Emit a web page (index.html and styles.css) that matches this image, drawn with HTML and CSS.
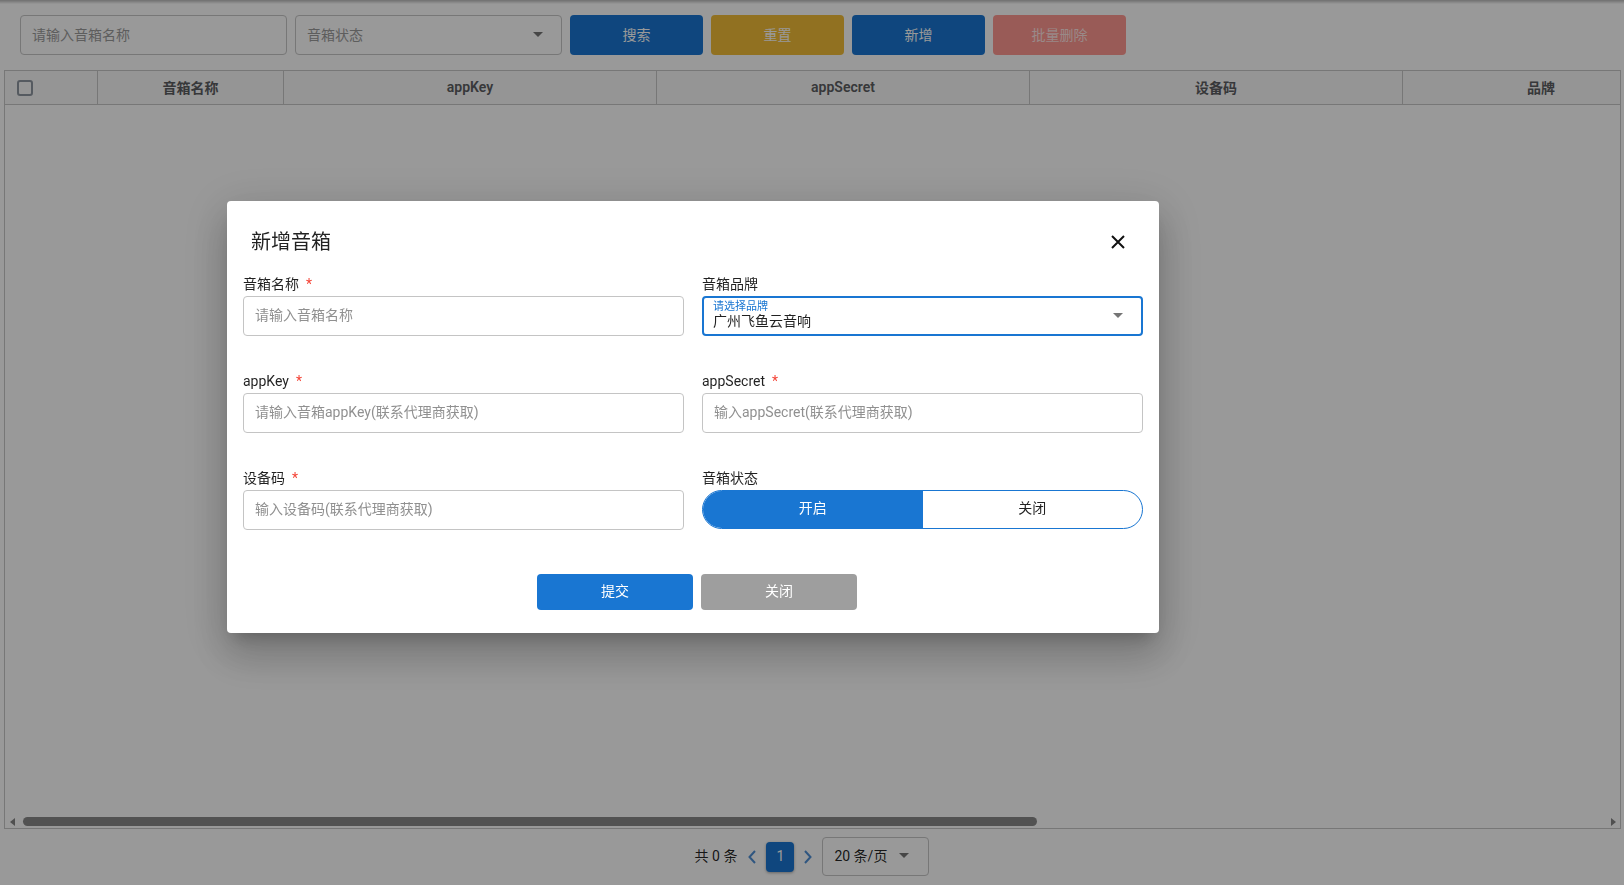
FILE: index.html
```html
<!DOCTYPE html>
<html lang="zh-CN">
<head>
<meta charset="utf-8">
<title>音箱管理</title>
<link rel="stylesheet" href="styles.css">
</head>
<body>
<div class="appbar-shadow"></div>
<div class="toolbar">
  <div class="search-field"><span class="ph">请输入音箱名称</span></div>
  <div class="search-field select-field"><span class="ph">音箱状态</span><span class="caret"></span></div>
  <div class="btn btn-blue">搜索</div>
  <div class="btn btn-yellow">重置</div>
  <div class="btn btn-blue">新增</div>
  <div class="btn btn-red">批量删除</div>
</div>

<div class="table-wrap">
  <div class="thead">
    <div class="th c1"><span class="checkbox"></span></div>
    <div class="th c2">音箱名称</div>
    <div class="th c3">appKey</div>
    <div class="th c3">appSecret</div>
    <div class="th c3">设备码</div>
    <div class="th c6">品牌</div>
  </div>
  <div class="tbody"></div>
  <div class="hscroll">
    <span class="arr-left"></span>
    <span class="thumb"></span>
    <span class="arr-right"></span>
  </div>
</div>

<div class="pager">
  <span class="total">共 0 条</span>
  <svg class="chev" width="8" height="14" viewBox="0 0 8 14"><path d="M7 1 L1.5 7 L7 13" fill="none" stroke="#4f8fd6" stroke-width="2"/></svg>
  <span class="page">1</span>
  <svg class="chev" width="8" height="14" viewBox="0 0 8 14"><path d="M1 1 L6.5 7 L1 13" fill="none" stroke="#4f8fd6" stroke-width="2"/></svg>
  <div class="size-select"><span>20 条/页</span><span class="caret"></span></div>
</div>

<div class="overlay">
  <div class="modal">
    <div class="modal-head">
      <div class="title">新增音箱</div>
      <div class="close">
        <svg width="14" height="14" viewBox="0 0 14 14"><path d="M1 1 L13 13 M13 1 L1 13" stroke="#111" stroke-width="2" fill="none"/></svg>
      </div>
    </div>
    <div class="form">
      <div class="field">
        <div class="label">音箱名称<span class="req">*</span></div>
        <div class="input"><span class="ph2">请输入音箱名称</span></div>
      </div>
      <div class="field">
        <div class="label">音箱品牌</div>
        <div class="brand-select">
          <div class="brand-text">
            <span class="float-label">请选择品牌</span>
            <span class="value">广州飞鱼云音响</span>
          </div>
          <span class="caret caret-dark"></span>
        </div>
      </div>
      <div class="field">
        <div class="label">appKey<span class="req">*</span></div>
        <div class="input"><span class="ph2">请输入音箱appKey(联系代理商获取)</span></div>
      </div>
      <div class="field">
        <div class="label">appSecret<span class="req">*</span></div>
        <div class="input"><span class="ph2">输入appSecret(联系代理商获取)</span></div>
      </div>
      <div class="field">
        <div class="label">设备码<span class="req">*</span></div>
        <div class="input"><span class="ph2">输入设备码(联系代理商获取)</span></div>
      </div>
      <div class="field">
        <div class="label">音箱状态</div>
        <div class="toggle">
          <div class="opt on">开启</div>
          <div class="opt">关闭</div>
        </div>
      </div>
    </div>
    <div class="actions">
      <div class="abtn submit">提交</div>
      <div class="abtn cancel">关闭</div>
    </div>
  </div>
</div>
</body>
</html>
```
FILE: styles.css
```css
* { box-sizing: border-box; }
html, body { margin: 0; padding: 0; }
body {
  width: 1624px;
  height: 885px;
  overflow: hidden;
  background: #fff;
  font-family: Roboto, "Noto Sans CJK SC", sans-serif;
  font-size: 14px;
  color: rgba(0,0,0,.87);
}

.appbar-shadow {
  height: 4px;
  background: linear-gradient(rgba(0,0,0,.28), rgba(0,0,0,0));
}

.toolbar {
  display: flex;
  gap: 8px;
  padding: 11px 0 0 20px;
}
.search-field {
  width: 267px;
  height: 40px;
  border: 1px solid #c6c6c6;
  border-radius: 4px;
  padding: 0 11px 2px;
  display: flex;
  align-items: center;
  justify-content: space-between;
}
.ph { color: #9c9c9c; }
.select-field { padding-right: 18px; }
.caret {
  width: 0; height: 0;
  border-left: 5px solid transparent;
  border-right: 5px solid transparent;
  border-top: 5px solid #757575;
}
.btn {
  width: 133px;
  height: 40px;
  padding-bottom: 2px;
  border-radius: 4px;
  color: #fff;
  display: flex;
  align-items: center;
  justify-content: center;
}
.btn-blue { background: #1976d2; }
.btn-yellow { background: #f2bd38; }
.btn-red { background: #ff9891; color: rgba(255,255,255,.75); }

.table-wrap {
  margin: 15px 3px 0 4px;
  height: 759px;
  border: 1px solid #c6c6c6;
  display: flex;
  flex-direction: column;
  overflow: hidden;
}
.thead {
  flex: none;
  display: flex;
  height: 34px;
  border-bottom: 1px solid #c6c6c6;
  background: #f8f8f8;
}
.th {
  flex: none;
  border-right: 1px solid #c6c6c6;
  display: flex;
  align-items: center;
  justify-content: center;
  padding-bottom: 1px;
  font-weight: 600;
  color: #5c5e62;
}
.c1 { width: 93px; justify-content: flex-start; padding-left: 12px; padding-bottom: 0; }
.c2 { width: 186px; }
.c3 { width: 373px; }
.c6 { width: 216px; border-right: none; padding-left: 60px; }
.checkbox {
  width: 16px;
  height: 16px;
  border: 2px solid #8e96a0;
  border-radius: 3px;
}
.tbody { flex: 1; }
.hscroll {
  flex: none;
  height: 13px;
  display: flex;
  align-items: center;
}
.arr-left {
  margin-left: 5px;
  width: 0; height: 0;
  border-top: 4px solid transparent;
  border-bottom: 4px solid transparent;
  border-right: 5px solid #868686;
}
.thumb {
  margin-left: 8px;
  width: 1014px;
  height: 9px;
  border-radius: 5px;
  background: #898989;
}
.arr-right {
  margin-left: auto;
  margin-right: 4px;
  width: 0; height: 0;
  border-top: 4px solid transparent;
  border-bottom: 4px solid transparent;
  border-left: 5px solid #868686;
}

.pager {
  margin-top: 8px;
  height: 39px;
  display: flex;
  justify-content: center;
  align-items: center;
}
.total { margin-right: 11px; margin-bottom: 3px; }
.chev { display: block; }
.page {
  margin: 0 10px;
  width: 28px;
  height: 30px;
  padding-bottom: 1px;
  border-radius: 4px;
  background: #1976d2;
  color: #fff;
  display: flex;
  align-items: center;
  justify-content: center;
  box-shadow: 0 1px 3px rgba(0,0,0,.35);
}
.size-select {
  margin-left: 10px;
  width: 107px;
  height: 39px;
  border: 1px solid #c6c6c6;
  border-radius: 4px;
  padding: 0 19px 3px 11px;
  display: flex;
  align-items: center;
  justify-content: space-between;
}

.overlay {
  position: fixed;
  inset: 0;
  background: rgba(0,0,0,.4);
}
.modal {
  position: absolute;
  left: 227px;
  top: 201px;
  width: 932px;
  background: #fff;
  border-radius: 4px;
  padding: 23px 16px 23px;
  box-shadow: 0 11px 15px -7px rgba(0,0,0,.2), 0 24px 38px 3px rgba(0,0,0,.14), 0 9px 46px 8px rgba(0,0,0,.12);
}
.modal-head {
  height: 36px;
  display: flex;
  align-items: center;
  justify-content: space-between;
  padding: 0 7px 0 8px;
}
.title { font-size: 20px; color: rgba(0,0,0,.87); margin-bottom: 3px; }
.close {
  width: 36px;
  height: 36px;
  display: flex;
  align-items: center;
  justify-content: center;
}
.form {
  margin-top: 16px;
  display: grid;
  grid-template-columns: 441px 441px;
  column-gap: 18px;
  row-gap: 37px;
}
.label {
  height: 20px;
  line-height: 16px;
  color: rgba(0,0,0,.87);
}
.req { color: #f44336; margin-left: 7px; }
.input {
  height: 40px;
  border: 1px solid #c4c4c4;
  border-radius: 4px;
  padding: 0 11px 4px;
  display: flex;
  align-items: center;
}
.ph2 { color: #909090; }
.brand-select {
  height: 40px;
  border: 2px solid #1976d2;
  border-radius: 4px;
  padding: 0 18px 1px 9px;
  display: flex;
  align-items: center;
  justify-content: space-between;
}
.brand-text { display: flex; flex-direction: column; }
.float-label { font-size: 11px; line-height: 12px; color: #1976d2; }
.value { font-size: 14px; line-height: 17px; color: rgba(0,0,0,.87); }
.caret-dark { border-top-color: #757575; }
.toggle {
  height: 39px;
  border: 1px solid #1976d2;
  border-radius: 20px;
  overflow: hidden;
  display: flex;
}
.opt {
  flex: 1;
  display: flex;
  align-items: center;
  justify-content: center;
  padding-bottom: 5px;
  color: rgba(0,0,0,.87);
}
.opt.on { background: #1976d2; color: #fff; }
.actions {
  margin-top: 44px;
  padding-left: 8px;
  display: flex;
  justify-content: center;
  gap: 8px;
}
.abtn {
  width: 156px;
  height: 36px;
  padding-bottom: 4px;
  border-radius: 4px;
  color: #fff;
  display: flex;
  align-items: center;
  justify-content: center;
}
.submit { background: #1976d2; }
.cancel { background: #9e9e9e; }
```
